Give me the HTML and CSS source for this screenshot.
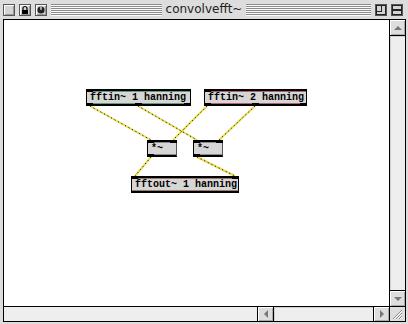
FILE: index.html
```html
<!DOCTYPE html>
<html lang="en">
<head>
    <meta charset="UTF-8">
    <title>convolvefft~</title>
    <link rel="stylesheet" href="styles.css">
</head>
<body>
    <div class="window">
        <!-- Title bar -->
        <div class="titlebar">
            <div class="tb-side tb-left">
                <span class="wbox"></span>
                <span class="wbox">
                    <svg width="10" height="10" viewBox="0 0 10 10">
                        <path d="M3 5V3.5a2 2 0 0 1 4 0V5" fill="none" stroke="#000" stroke-width="1.2"/>
                        <rect x="2" y="5" width="6" height="4" fill="#000"/>
                    </svg>
                </span>
                <span class="wbox">
                    <svg width="10" height="10" viewBox="0 0 10 10">
                        <circle cx="5" cy="5" r="3.6" fill="#222"/>
                        <rect x="4.4" y="1.8" width="1.2" height="3" fill="#fff"/>
                    </svg>
                </span>
                <div class="stripes"></div>
            </div>
            <div class="title">convolvefft~</div>
            <div class="tb-side tb-right">
                <div class="stripes"></div>
                <span class="wbox">
                    <svg width="10" height="10" viewBox="0 0 10 10">
                        <rect x="0.5" y="0.5" width="9" height="9" fill="none" stroke="#222"/>
                        <rect x="0.5" y="0.5" width="5" height="6" fill="none" stroke="#222"/>
                    </svg>
                </span>
                <span class="wbox">
                    <svg width="10" height="10" viewBox="0 0 10 10">
                        <rect x="0.5" y="0.5" width="9" height="9" fill="none" stroke="#222"/>
                        <line x1="0" y1="4.5" x2="10" y2="4.5" stroke="#222"/>
                        <line x1="0" y1="5.5" x2="10" y2="5.5" stroke="#222"/>
                    </svg>
                </span>
            </div>
        </div>

        <!-- Window content -->
        <div class="frame">
            <div class="canvas">
                <svg class="cords" width="385" height="286">
                    <g class="cord-base">
                        <line x1="86" y1="86" x2="147" y2="120"/>
                        <line x1="134" y1="86" x2="193" y2="120"/>
                        <line x1="203" y1="86" x2="169" y2="120"/>
                        <line x1="251" y1="86" x2="215" y2="120"/>
                        <line x1="147" y1="137" x2="131" y2="156"/>
                        <line x1="193" y1="137" x2="231" y2="156"/>
                    </g>
                    <g class="cord-dash">
                        <line x1="86" y1="86" x2="147" y2="120"/>
                        <line x1="134" y1="86" x2="193" y2="120"/>
                        <line x1="203" y1="86" x2="169" y2="120"/>
                        <line x1="251" y1="86" x2="215" y2="120"/>
                        <line x1="147" y1="137" x2="131" y2="156"/>
                        <line x1="193" y1="137" x2="231" y2="156"/>
                    </g>
                </svg>

                <div class="obj tint-green" style="left: 82px; top: 69px; width: 105px;">
                    fftin~ 1 hanning
                    <i class="port in left"></i>
                    <i class="port out left"></i>
                    <i class="port out mid"></i>
                    <i class="port out right"></i>
                </div>
                <div class="obj tint-pink" style="left: 200px; top: 69px; width: 103px;">
                    fftin~ 2 hanning
                    <i class="port in left"></i>
                    <i class="port out left"></i>
                    <i class="port out mid"></i>
                    <i class="port out right"></i>
                </div>
                <div class="obj tint-gray" style="left: 143px; top: 120px; width: 30px;">
                    *~
                    <i class="port in left"></i>
                    <i class="port in right"></i>
                    <i class="port out left"></i>
                </div>
                <div class="obj tint-gray" style="left: 189px; top: 120px; width: 30px;">
                    *~
                    <i class="port in left"></i>
                    <i class="port in right"></i>
                    <i class="port out left"></i>
                </div>
                <div class="obj tint-brown" style="left: 127px; top: 156px; width: 108px;">
                    fftout~ 1 hanning
                    <i class="port in left"></i>
                    <i class="port in right"></i>
                </div>
            </div>

            <div class="vscroll">
                <div class="arrow up"></div>
                <div class="track"></div>
                <div class="arrow down"></div>
            </div>

            <div class="hbar">
                <div class="status"></div>
                <div class="hscroll">
                    <div class="arrow left"></div>
                    <div class="track"></div>
                    <div class="arrow right"></div>
                </div>
            </div>

            <div class="grow">
                <svg width="15" height="14" viewBox="0 0 15 14">
                    <g stroke="#888">
                        <line x1="3" y1="12" x2="12" y2="3"/>
                        <line x1="6" y1="12" x2="12" y2="6"/>
                        <line x1="9" y1="12" x2="12" y2="9"/>
                    </g>
                    <g stroke="#fff">
                        <line x1="4" y1="12" x2="12" y2="4"/>
                        <line x1="7" y1="12" x2="12" y2="7"/>
                        <line x1="10" y1="12" x2="12" y2="10"/>
                    </g>
                </svg>
            </div>
        </div>
    </div>
</body>
</html>
```

FILE: styles.css
```css
body {
    margin: 0;
    background: #fff;
    font-family: "DejaVu Sans", sans-serif;
}

.window {
    width: 408px;
    height: 324px;
    display: flex;
    flex-direction: column;
    background: #dddddd;
}

/* title bar */
.titlebar {
    height: 19px;
    display: grid;
    grid-template-columns: 1fr auto 1fr;
}

.tb-side {
    display: flex;
    align-items: flex-start;
    gap: 4px;
    padding-top: 4px;
}

.tb-left {
    padding-left: 3px;
}

.tb-right {
    padding-right: 5px;
}

.title {
    padding: 0 4px;
    font-size: 12px;
    line-height: 19px;
    color: #222;
}

.stripes {
    flex: 1;
    height: 12px;
    background: repeating-linear-gradient(to bottom, #8a8a8a 0 1px, #fbfbfb 1px 2px);
}

.wbox {
    width: 12px;
    height: 12px;
    box-sizing: border-box;
    border: 1px solid #555;
    background: #d4d4d4;
    box-shadow: inset 1px 1px 0 #fff, inset -1px -1px 0 #999;
    display: flex;
    align-items: center;
    justify-content: center;
}

/* content frame */
.frame {
    flex: 1;
    margin: 0 2px 2px 3px;
    border: 1px solid #000;
    display: grid;
    grid-template-columns: 1fr 15px;
    grid-template-rows: 1fr 14px;
    gap: 1px;
    background: #000;
}

.canvas {
    position: relative;
    overflow: hidden;
    background: #fff;
}

.cords {
    position: absolute;
    left: 0;
    top: 0;
}

.cord-base line {
    stroke: #e8dc4e;
    stroke-width: 2;
}

.cord-dash line {
    stroke: #222;
    stroke-width: 1;
    stroke-dasharray: 1.2 2.8;
}

/* patcher objects */
.obj {
    position: absolute;
    height: 17px;
    box-sizing: border-box;
    padding-left: 3px;
    border: 1px solid #000;
    border-top-width: 2px;
    border-bottom-width: 2px;
    background: #d6d6d6;
    font-family: "Liberation Mono", monospace;
    font-size: 10px;
    font-weight: bold;
    line-height: 13px;
    color: #000;
    white-space: nowrap;
}

.tint-green {
    box-shadow: inset 0 1px 0 #5f9c7c, inset 0 -1px 0 #5f9c7c;
}

.tint-pink {
    box-shadow: inset 0 1px 0 #b25c7e, inset 0 -1px 0 #b25c7e;
}

.tint-gray {
    border-right-color: #555;
    box-shadow: inset 0 1px 0 #8a8a8a, inset 0 -1px 0 #8a8a8a;
}

.tint-brown {
    box-shadow: inset 0 1px 0 #9c7a68, inset 0 -1px 0 #9c7a68;
}

.port {
    position: absolute;
    width: 7px;
    height: 3px;
    background: #000;
}

.port.in {
    top: -2px;
}

.port.out {
    bottom: -2px;
}

.port.left {
    left: -1px;
}

.port.right {
    right: -1px;
}

.port.mid {
    left: 50%;
    margin-left: -4px;
}

/* scroll bars */
.vscroll,
.hscroll {
    display: flex;
    background: #000;
}

.vscroll {
    flex-direction: column;
    gap: 1px;
}

.hscroll {
    gap: 1px;
}

.track {
    flex: 1;
    background: #eeeeee;
    box-shadow: inset 1px 1px 0 #d0d0d0;
}

.arrow {
    flex: 0 0 15px;
    background: #dddddd;
    box-shadow: inset 1px 1px 0 #fff, inset -1px -1px 0 #aaa;
    display: flex;
    align-items: center;
    justify-content: center;
}

.arrow::after {
    content: "";
    width: 0;
    height: 0;
}

.arrow.up::after {
    border-left: 4px solid transparent;
    border-right: 4px solid transparent;
    border-bottom: 4px solid #777;
}

.arrow.down::after {
    border-left: 4px solid transparent;
    border-right: 4px solid transparent;
    border-top: 4px solid #777;
}

.arrow.left::after {
    border-top: 4px solid transparent;
    border-bottom: 4px solid transparent;
    border-right: 4px solid #777;
}

.arrow.right::after {
    border-top: 4px solid transparent;
    border-bottom: 4px solid transparent;
    border-left: 4px solid #777;
}

.hbar {
    display: grid;
    grid-template-columns: 1fr 131px;
    gap: 1px;
    background: #000;
}

.status {
    background: #eeeeee;
}

.grow {
    background: #dddddd;
    display: flex;
}
```
